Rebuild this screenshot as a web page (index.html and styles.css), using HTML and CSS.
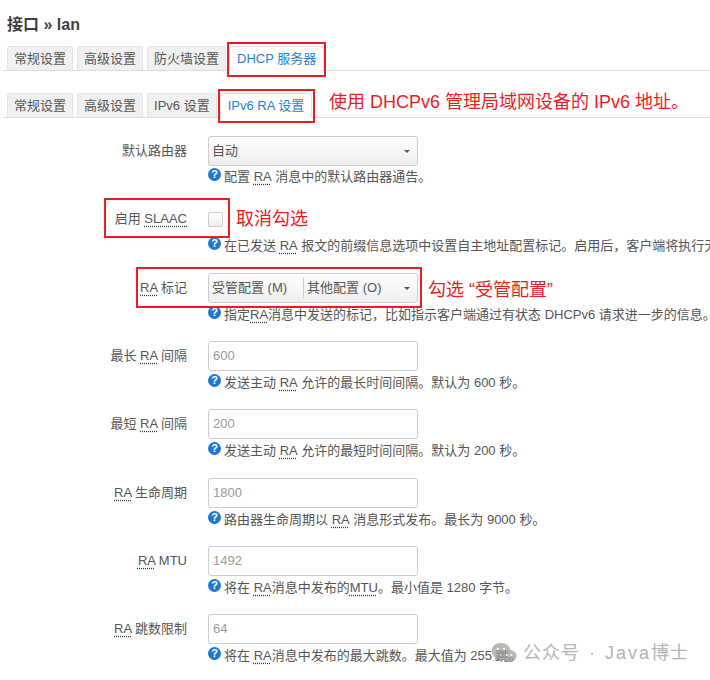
FILE: index.html
```html
<!DOCTYPE html>
<html lang="zh-CN">
<head>
  <meta charset="UTF-8">
  <title>接口 » lan</title>
  <link rel="stylesheet" href="styles.css">
</head>
<body>
  <div class="page">
    <h2 class="title">接口 » lan</h2>

    <!-- top tabs -->
    <ul class="tabs tabs-main">
      <li class="tab">常规设置</li>
      <li class="tab">高级设置</li>
      <li class="tab">防火墙设置</li>
      <li class="tab active">DHCP 服务器</li>
    </ul>

    <!-- sub tabs -->
    <ul class="tabs tabs-sub">
      <li class="tab">常规设置</li>
      <li class="tab">高级设置</li>
      <li class="tab">IPv6 设置</li>
      <li class="tab active">IPv6 RA 设置</li>
    </ul>

    <div class="form">
      <div class="row row-first">
        <label class="row-label">默认路由器</label>
        <div class="row-field">
          <div class="select"><span class="select-text">自动</span><span class="caret"></span></div>
          <div class="help"><span class="help-icon">?</span>配置 <span class="abbr">RA</span> 消息中的默认路由器通告。</div>
        </div>
      </div>

      <div class="row row-tall">
        <label class="row-label">启用 <span class="abbr">SLAAC</span></label>
        <div class="row-field">
          <div class="check-wrap"><span class="checkbox"></span></div>
          <div class="help"><span class="help-icon">?</span>在已发送 <span class="abbr">RA</span> 报文的前缀信息选项中设置自主地址配置标记。启用后&#65292;客户端将执行无</div>
        </div>
      </div>

      <div class="row">
        <label class="row-label"><span class="abbr">RA</span> 标记</label>
        <div class="row-field">
          <div class="select">
            <span class="select-item">受管配置 (M)</span>
            <span class="select-item select-item-last">其他配置 (O)</span>
            <span class="caret"></span>
          </div>
          <div class="help"><span class="help-icon">?</span>指定<span class="abbr">RA</span>消息中发送的标记&#65292;比如指示客户端通过有状态 DHCPv6 请求进一步的信息。</div>
        </div>
      </div>

      <div class="row">
        <label class="row-label">最长 <span class="abbr">RA</span> 间隔</label>
        <div class="row-field">
          <div class="input">600</div>
          <div class="help"><span class="help-icon">?</span>发送主动 <span class="abbr">RA</span> 允许的最长时间间隔。默认为 600 秒。</div>
        </div>
      </div>

      <div class="row row-tall">
        <label class="row-label">最短 <span class="abbr">RA</span> 间隔</label>
        <div class="row-field">
          <div class="input">200</div>
          <div class="help"><span class="help-icon">?</span>发送主动 <span class="abbr">RA</span> 允许的最短时间间隔。默认为 200 秒。</div>
        </div>
      </div>

      <div class="row">
        <label class="row-label"><span class="abbr">RA</span> 生命周期</label>
        <div class="row-field">
          <div class="input">1800</div>
          <div class="help"><span class="help-icon">?</span>路由器生命周期以 <span class="abbr">RA</span> 消息形式发布。最长为 9000 秒。</div>
        </div>
      </div>

      <div class="row">
        <label class="row-label"><span class="abbr">RA</span> MTU</label>
        <div class="row-field">
          <div class="input">1492</div>
          <div class="help"><span class="help-icon">?</span>将在 <span class="abbr">RA</span>消息中发布的<span class="abbr">MTU</span>。最小值是 1280 字节。</div>
        </div>
      </div>

      <div class="row">
        <label class="row-label"><span class="abbr">RA</span> 跳数限制</label>
        <div class="row-field">
          <div class="input">64</div>
          <div class="help"><span class="help-icon">?</span>将在 <span class="abbr">RA</span>消息中发布的最大跳数。最大值为 255 跳。</div>
        </div>
      </div>
    </div>

    <!-- red marks drawn over the screenshot -->
    <div class="mark mark-dhcp"></div>
    <div class="mark mark-ra"></div>
    <div class="mark mark-slaac"></div>
    <div class="mark mark-flags"></div>
    <div class="note note-top">使用 DHCPv6 管理局域网设备的 IPv6 地址。</div>
    <div class="note note-slaac">取消勾选</div>
    <div class="note note-flags">勾选 “受管配置”</div>

    <!-- watermark -->
    <div class="watermark">
      <svg class="wechat" width="26" height="22" viewBox="0 0 26 22">
        <ellipse cx="10" cy="9" rx="9.5" ry="8" fill="#999"/>
        <path d="M4 14 L3.5 19 L9 16 Z" fill="#999"/>
        <ellipse cx="18" cy="14" rx="7.5" ry="6.3" fill="#999"/>
        <circle cx="7" cy="7" r="1.3" fill="#fff"/>
        <circle cx="13" cy="7" r="1.3" fill="#fff"/>
        <circle cx="15.5" cy="13" r="1" fill="#fff"/>
        <circle cx="20.5" cy="13" r="1" fill="#fff"/>
      </svg>
      <span>公众号 · <span class="watermark-latin">Java</span>博士</span>
    </div>
  </div>
</body>
</html>
```

FILE: styles.css
```css
/* General */
html, body {
  margin: 0;
  padding: 0;
}

body {
  width: 710px;
  height: 680px;
  overflow: hidden;
  background-color: #fff;
  color: #404040;
  font-family: "Liberation Sans", "Noto Sans CJK SC", sans-serif;
  font-size: 13px;
}

.page {
  position: relative;
  width: 710px;
  height: 680px;
  overflow: hidden;
  padding-top: 15px;
  box-sizing: border-box;
}

.title {
  margin: 0 0 12px 7px;
  font-size: 16px;
  line-height: 19px;
  font-weight: bold;
  color: #404040;
}

/* Tabs */
.tabs {
  display: flex;
  gap: 4px;
  list-style: none;
  margin: 0 0 0 3px;
  padding: 0 0 0 4px;
  height: 24px;
  border-bottom: 1px solid #ddd;
}

.tabs-sub {
  margin-top: 22px;
}

.tab {
  height: 24px;
  padding: 0 6px;
  line-height: 24px;
  box-sizing: border-box;
  background-color: #f0f0f0;
  border: 1px solid #e4e4e4;
  border-bottom: none;
  border-radius: 3px 3px 0 0;
  color: #555;
  white-space: nowrap;
}

.tab.active {
  height: 25px;
  margin-left: -1px;
  padding: 0 7px;
  background-color: #fff;
  color: #1f7fd6;
}

/* Form rows */
.form {
  margin-top: 18px;
}

.row {
  display: flex;
  height: 68px;
}

.row-tall {
  height: 69px;
}

.row-label {
  width: 187px;
  flex: none;
  text-align: right;
  line-height: 29px;
  color: #555;
  white-space: nowrap;
}

.row-field {
  margin-left: 21px;
  min-width: 0;
  flex: 1;
}

.abbr {
  text-decoration: underline dotted #333;
  text-underline-offset: 3px;
}

.input,
.select {
  width: 210px;
  height: 30px;
  box-sizing: border-box;
  border: 1px solid #ccc;
  border-radius: 3px;
  line-height: 28px;
  padding-left: 3px;
}

.input {
  color: #999;
  padding-left: 4px;
  background-color: #fff;
}

.select {
  display: flex;
  align-items: center;
  position: relative;
  background: linear-gradient(#fff, #eee);
  color: #555;
}

.select-item {
  padding-right: 16px;
  height: 20px;
  line-height: 20px;
  border-right: 1px solid #ccc;
  white-space: nowrap;
}

.select-item-last {
  padding: 0 0 0 3px;
  border-right: none;
}

.caret {
  position: absolute;
  right: 7px;
  top: 13px;
  width: 0;
  height: 0;
  border-left: 3px solid transparent;
  border-right: 3px solid transparent;
  border-top: 3px solid #555;
}

.check-wrap {
  height: 30px;
  display: flex;
  align-items: center;
}

.checkbox {
  width: 13px;
  height: 13px;
  border: 1px solid #ccc;
  border-radius: 2px;
  background: linear-gradient(#fff, #eee);
}

/* Help text */
.help {
  display: flex;
  align-items: center;
  height: 20px;
  margin-top: 2px;
  color: #555;
  white-space: pre;
  line-height: 20px;
}

.row-first .help {
  margin-top: 1px;
}

.help-icon {
  flex: none;
  width: 13px;
  height: 13px;
  margin: -5px 3px 0 0;
  border-radius: 50%;
  background-color: #1f77cf;
  color: #fff;
  font-size: 11px;
  font-weight: bold;
  line-height: 13px;
  text-align: center;
}

/* Red marks */
.mark {
  position: absolute;
  box-sizing: border-box;
  border: 2px solid #ed1c24;
}

.mark-dhcp { left: 227px; top: 42px; width: 99px; height: 35px; }
.mark-ra { left: 218px; top: 89px; width: 97px; height: 34px; }
.mark-slaac { left: 104px; top: 198px; width: 126px; height: 40px; }
.mark-flags { left: 136px; top: 267px; width: 286px; height: 41px; }

.note {
  position: absolute;
  color: #ed1c24;
  font-size: 18px;
  line-height: 24px;
  white-space: nowrap;
}

.note-top { left: 329px; top: 90px; }
.note-slaac { left: 236px; top: 207px; }
.note-flags { left: 428px; top: 278px; }

/* Watermark */
.watermark {
  position: absolute;
  left: 491px;
  top: 641px;
  display: flex;
  align-items: center;
  gap: 6px;
  color: #b4b4b4;
  font-size: 18px;
  line-height: 24px;
  letter-spacing: 1px;
  word-spacing: 3px;
  white-space: nowrap;
}

.watermark-latin {
  letter-spacing: 2px;
}

.wechat {
  opacity: 0.7;
}
```
